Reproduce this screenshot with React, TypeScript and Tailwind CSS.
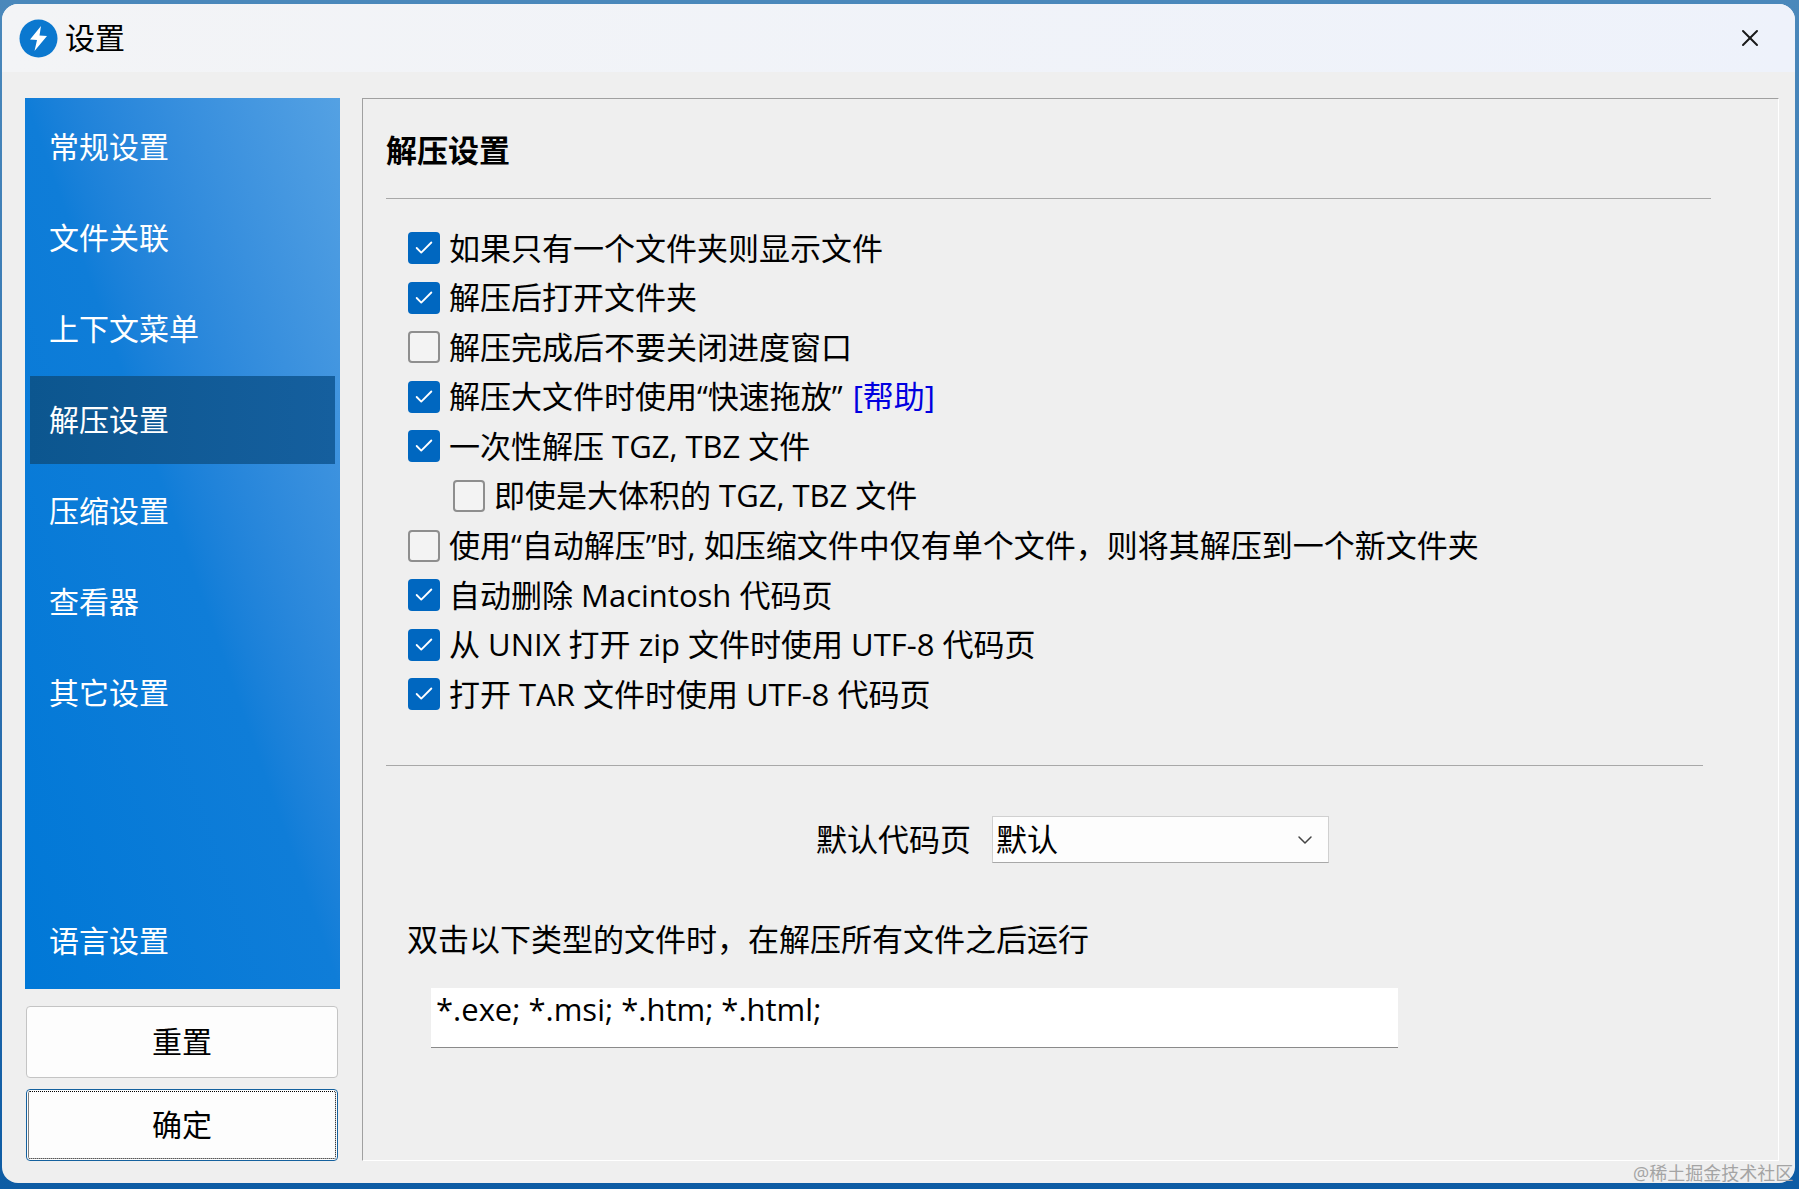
import { Check, ChevronDown, X } from "lucide-react";

const cjk = "font-['Open_Sans','Noto_Sans_CJK_SC',sans-serif]";

const menuTop = ["常规设置", "文件关联", "上下文菜单", "解压设置", "压缩设置", "查看器", "其它设置"];

const options = [
  { label: "如果只有一个文件夹则显示文件", checked: true },
  { label: "解压后打开文件夹", checked: true },
  { label: "解压完成后不要关闭进度窗口", checked: false },
  { label: "解压大文件时使用“快速拖放”", checked: true, help: true },
  { label: "一次性解压 TGZ, TBZ 文件", checked: true },
  { label: "即使是大体积的 TGZ, TBZ 文件", checked: false, nested: true },
  { label: "使用“自动解压”时, 如压缩文件中仅有单个文件，则将其解压到一个新文件夹", checked: false },
  { label: "自动删除 Macintosh 代码页", checked: true },
  { label: "从 UNIX 打开 zip 文件时使用 UTF-8 代码页", checked: true },
  { label: "打开 TAR 文件时使用 UTF-8 代码页", checked: true },
];

function CheckBox({ checked }: { checked: boolean }) {
  if (checked) {
    return (
      <span className="flex h-[32px] w-[32px] shrink-0 items-center justify-center rounded-[4px] bg-[#0067c0]">
        <Check size={22} strokeWidth={2} className="text-white" />
      </span>
    );
  }
  return <span className="h-[32px] w-[32px] shrink-0 rounded-[4px] border-2 border-[#8e8e8e] bg-[#f3f3f3]" />;
}

function MenuItem({ label, active }: { label: string; active?: boolean }) {
  return (
    <div
      className={`flex h-[88px] items-center pl-[19px] text-[30px] leading-none text-white ${
        active ? "bg-[#0f5c9c] bg-gradient-to-r from-[#0c568f] to-[#155f9e]" : ""
      }`}
    >
      {label}
    </div>
  );
}

export default function App() {
  return (
    <div className={`relative h-[1189px] w-[1799px] overflow-hidden bg-gradient-to-b from-[#4a88bb] to-[#0d5ca4] pb-[6px] pl-[2px] pr-[4px] pt-[4px] text-black ${cjk}`}>
      <div className="flex h-full flex-col overflow-hidden rounded-[16px] bg-[#efefef]">
        <div className="flex h-[68px] items-center justify-between bg-gradient-to-r from-[#f3f4f6] to-[#eef2fb] pl-[17px] pr-[31px]">
          <div className="flex items-center gap-[7px]">
            <svg width="39" height="39" viewBox="0 0 39 39">
              <circle cx="19.5" cy="19.5" r="19" fill="#0b78cf" />
              <path d="M22 7 L11 20.5 L18 21 L15.5 32 L28 17 L20.5 16.5 Z" fill="#ffffff" />
            </svg>
            <span className="text-[30px] leading-none">设置</span>
          </div>
          <X size={28} strokeWidth={1.7} className="text-[#1a1a1a]" />
        </div>

        <div className="flex flex-1 pl-[23px] pr-[16px] pt-[26px]">
          <div className="flex w-[315px] shrink-0 flex-col">
            <div className="flex h-[891px] flex-col bg-gradient-to-bl from-[#54a1e3] via-[#0f7dd8] via-50% to-[#0078d7] px-[5px] pb-[4px] pt-[5px]">
              <div className="flex flex-col gap-[3px]">
                {menuTop.map((m) => (
                  <MenuItem key={m} label={m} active={m === "解压设置"} />
                ))}
              </div>
              <div className="mt-auto">
                <MenuItem label="语言设置" />
              </div>
            </div>
            <button className="ml-[1px] mt-[17px] h-[72px] w-[312px] rounded-[4px] border border-[#c4c4c4] bg-[#fdfdfd] text-[30px] leading-none">
              重置
            </button>
            <button className="ml-[1px] mt-[11px] h-[72px] w-[312px] rounded-[4px] border border-[#15619e] bg-[#fdfdfd] text-[30px] leading-none outline-dotted outline-1 -outline-offset-3 outline-black">
              确定
            </button>
          </div>

          <div className="ml-[22px] flex h-[1063px] flex-1 flex-col border-b border-l border-r border-t border-b-white border-l-[#a0a0a0] border-r-white border-t-[#a0a0a0] pl-[23px] text-[31px] leading-none">
            <h2 className="mt-[33px] h-[37px] text-[31px] font-bold leading-[37px]">解压设置</h2>
            <div className="mt-[29px] mr-[67px] h-px bg-[#a8a8a8]" />

            <div className="mt-[33px] flex flex-col gap-[17.6px] pl-[22px]">
              {options.map((o) => (
                <div key={o.label} className={`flex items-center gap-[9px] ${o.nested ? "pl-[45px]" : ""}`}>
                  <CheckBox checked={o.checked} />
                  <span className="whitespace-nowrap">
                    {o.label}
                    {o.help && <span className="ml-[10px] text-[#0000e0]">[帮助]</span>}
                  </span>
                </div>
              ))}
            </div>

            <div className="mt-[55px] mr-[75px] h-px bg-[#a8a8a8]" />

            <div className="mt-[50px] flex items-center pl-[430px]">
              <span className="whitespace-nowrap">默认代码页</span>
              <div className="ml-[21px] flex h-[47px] w-[337px] items-center justify-between border border-[#d0d0d0] border-b-[#a8a8a8] bg-[#fdfdfd] pl-[3px] pr-[11px]">
                <span>默认</span>
                <ChevronDown size={24} strokeWidth={1.5} className="text-[#444444]" />
              </div>
            </div>

            <div className="mt-[61px] pl-[21px]">双击以下类型的文件时，在解压所有文件之后运行</div>

            <div className="ml-[45px] mt-[33px] flex h-[60px] w-[967px] items-start border-b border-b-[#8a8a8a] bg-white pl-[5px] pt-[6px]">
              *.exe; *.msi; *.htm; *.html;
            </div>
          </div>
        </div>
      </div>
      <span className="absolute left-[1633px] top-[1163px] whitespace-nowrap text-[18px] leading-[20px] text-[#a4a4a4]">
        @稀土掘金技术社区
      </span>
    </div>
  );
}
